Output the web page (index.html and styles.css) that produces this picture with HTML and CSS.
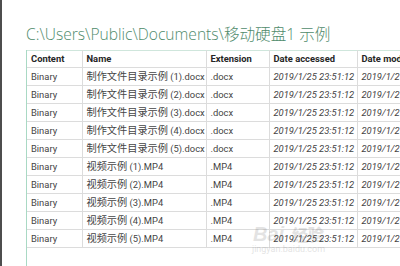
FILE: index.html
```html
<!DOCTYPE html>
<html lang="zh-CN">
<head>
<meta charset="utf-8">
<title>移动硬盘1 示例</title>
<link rel="stylesheet" href="styles.css">
</head>
<body>
<div class="window">
  <div class="edge"></div>
  <main class="pane">
    <h1 class="path">C:\Users\Public\Documents\移动硬盘1 示例</h1>
    <div class="sheet">
      <table class="files">
        <colgroup>
          <col class="c-content"><col class="c-name"><col class="c-ext"><col class="c-date"><col class="c-date2">
        </colgroup>
        <thead>
          <tr><th>Content</th><th>Name</th><th>Extension</th><th>Date accessed</th><th>Date modified</th></tr>
        </thead>
        <tbody>
          <tr><td>Binary</td><td><span class="han">制作文件目录示例</span> (1).docx</td><td>.docx</td><td class="date">2019/1/25 23:51:12</td><td class="date">2019/1/25 23:51:12</td></tr>
          <tr><td>Binary</td><td><span class="han">制作文件目录示例</span> (2).docx</td><td>.docx</td><td class="date">2019/1/25 23:51:12</td><td class="date">2019/1/25 23:51:12</td></tr>
          <tr><td>Binary</td><td><span class="han">制作文件目录示例</span> (3).docx</td><td>.docx</td><td class="date">2019/1/25 23:51:12</td><td class="date">2019/1/25 23:51:12</td></tr>
          <tr><td>Binary</td><td><span class="han">制作文件目录示例</span> (4).docx</td><td>.docx</td><td class="date">2019/1/25 23:51:12</td><td class="date">2019/1/25 23:51:12</td></tr>
          <tr><td>Binary</td><td><span class="han">制作文件目录示例</span> (5).docx</td><td>.docx</td><td class="date">2019/1/25 23:51:12</td><td class="date">2019/1/25 23:51:12</td></tr>
          <tr><td>Binary</td><td><span class="han">视频示例</span> (1).MP4</td><td>.MP4</td><td class="date">2019/1/25 23:51:12</td><td class="date">2019/1/25 23:51:12</td></tr>
          <tr><td>Binary</td><td><span class="han">视频示例</span> (2).MP4</td><td>.MP4</td><td class="date">2019/1/25 23:51:12</td><td class="date">2019/1/25 23:51:12</td></tr>
          <tr><td>Binary</td><td><span class="han">视频示例</span> (3).MP4</td><td>.MP4</td><td class="date">2019/1/25 23:51:12</td><td class="date">2019/1/25 23:51:12</td></tr>
          <tr><td>Binary</td><td><span class="han">视频示例</span> (4).MP4</td><td>.MP4</td><td class="date">2019/1/25 23:51:12</td><td class="date">2019/1/25 23:51:12</td></tr>
          <tr><td>Binary</td><td><span class="han">视频示例</span> (5).MP4</td><td>.MP4</td><td class="date">2019/1/25 23:51:12</td><td class="date">2019/1/25 23:51:12</td></tr>
        </tbody>
      </table>
    </div>
  </main>
  <div class="mark"><span class="mark-logo">Bai<b>经验</b></span><span class="mark-url">jingyan.baidu.com</span></div>
</div>
</body>
</html>
```

FILE: styles.css
```css
* { box-sizing: border-box; }

html, body {
  margin: 0;
  height: 100%;
  overflow: hidden;
  background: #ffffff;
}

body {
  font-family: Roboto, "Noto Sans CJK SC", sans-serif;
  color: #3a3a3a;
}

.window {
  position: relative;
  display: flex;
  height: 266px;
  width: 400px;
  overflow: hidden;
}

.edge {
  width: 2px;
  flex: none;
  background: #4e4e4e;
}

.pane {
  flex: 1;
  display: flex;
  flex-direction: column;
  padding-left: 24px;
  min-width: 0;
}

.path {
  margin: 0;
  height: 50px;
  padding-top: 24px;
  font-family: "Open Sans", "Noto Sans CJK SC", sans-serif;
  font-weight: 300;
  font-size: 15.6px;
  line-height: 20px;
  color: #4f8b6c;
  white-space: nowrap;
}

.sheet {
  flex: 1;
  border-left: 1px solid #a9d9c4;
}

.files {
  border-collapse: collapse;
  table-layout: fixed;
  width: 431px;
  font-size: 9.4px;
}

.c-content { width: 55px; }
.c-name { width: 124px; }
.c-ext { width: 63px; }
.c-date { width: 88px; }
.c-date2 { width: 101px; }

.files th,
.files td {
  height: 18px;
  padding: 0 0 0 4px;
  text-align: left;
  white-space: nowrap;
  overflow: hidden;
  border-right: 1px solid #dcdcdc;
  border-bottom: 1px solid #dcdcdc;
  line-height: 16px;
}

.files th {
  height: 17px;
  border-top: 1px solid #cfe6dc;
  font-weight: 700;
  color: #262626;
}

.files td {
  color: #444444;
}

.files td.date {
  font-style: italic;
}

.han {
  font-family: "Noto Sans CJK SC", sans-serif;
  font-size: 10.2px;
}

.mark {
  position: absolute;
  left: 252px;
  top: 224px;
  display: flex;
  flex-direction: column;
  align-items: center;
  opacity: 0.16;
  color: #555;
  pointer-events: none;
}

.mark-logo {
  font-family: "Liberation Sans", sans-serif;
  font-weight: 700;
  font-size: 20px;
  line-height: 20px;
  font-style: italic;
}

.mark-logo b {
  font-family: "Noto Sans CJK SC", sans-serif;
  font-style: normal;
  font-size: 16px;
  margin-left: 8px;
}

.mark-url {
  font-size: 9px;
  line-height: 10px;
}
```
